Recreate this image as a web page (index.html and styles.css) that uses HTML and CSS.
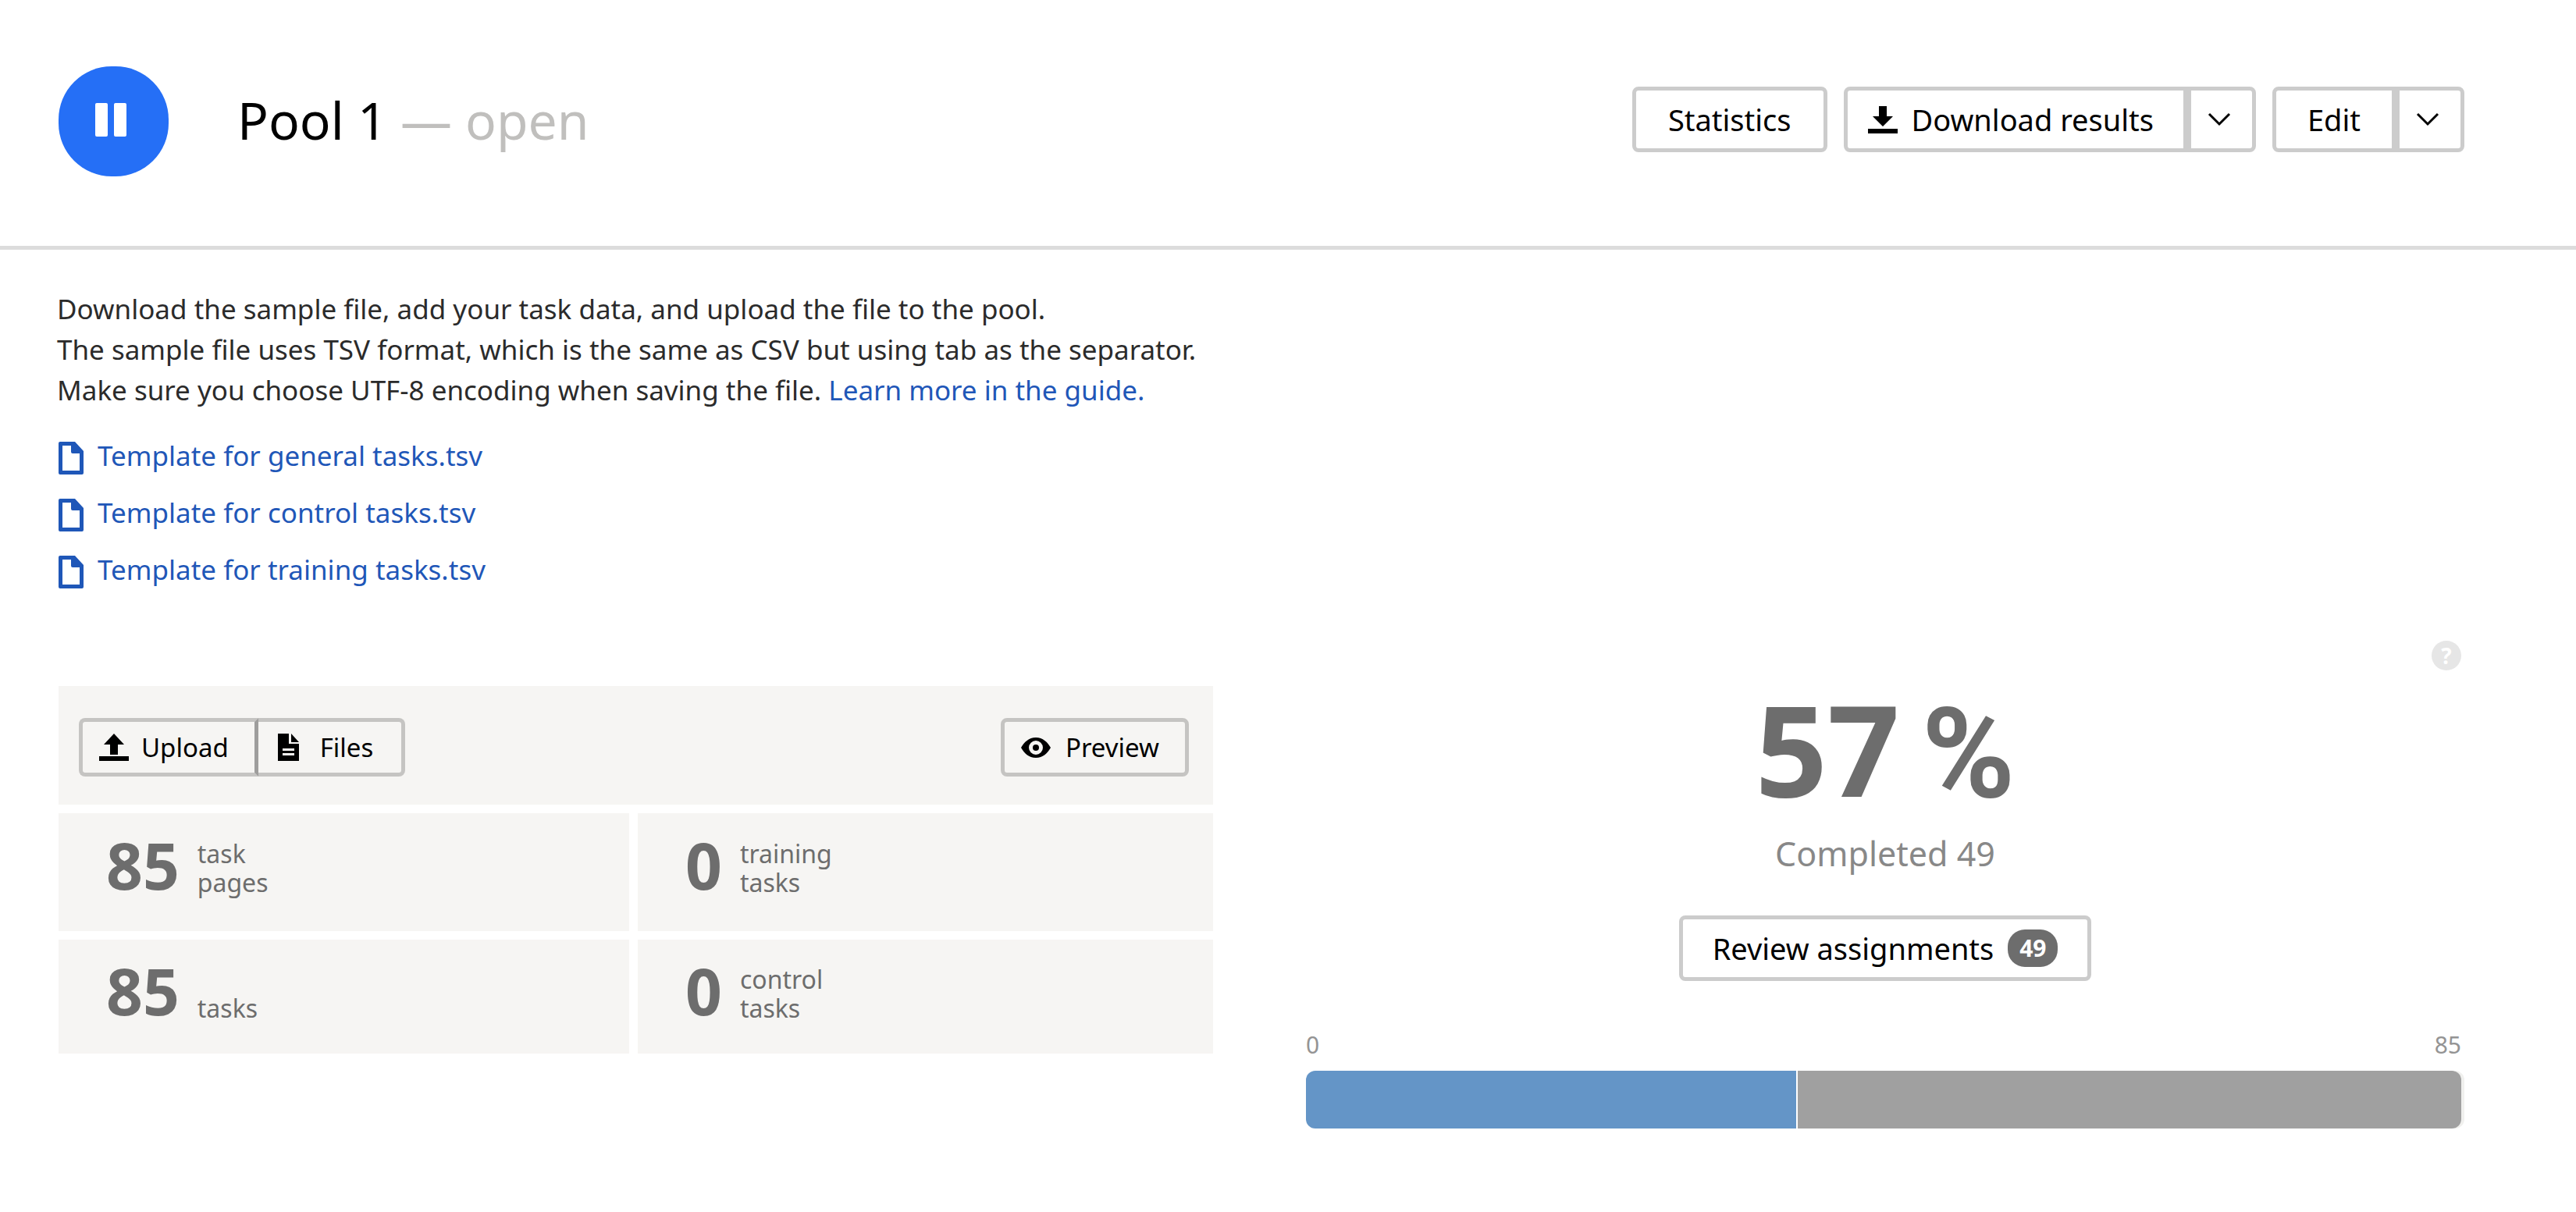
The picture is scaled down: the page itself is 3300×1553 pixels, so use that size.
FILE: index.html
```html
<!DOCTYPE html>
<html lang="en">
<head>
<meta charset="utf-8">
<meta name="viewport" content="width=device-width, initial-scale=1">
<title>Pool 1</title>
<link rel="stylesheet" href="styles.css">
</head>
<body>
<header class="header">
  <button class="pause" type="button" aria-label="Pause pool">
    <svg width="40" height="43" viewBox="0 0 40 43" fill="currentColor" aria-hidden="true"><rect width="16" height="43" rx="2"/><rect x="24" width="16" height="43" rx="2"/></svg>
  </button>
  <h1 class="title">Pool 1 <span class="status">— open</span></h1>
  <div class="actions">
    <button class="btn" type="button">Statistics</button>
    <div class="split">
      <button class="btn btn-download" type="button">
        <svg width="38" height="35" viewBox="0 0 38 35" fill="currentColor" aria-hidden="true"><path d="M14 0h10v13h8L19 26 6 13h8zM0 29h38v6H0z"/></svg>
        Download results
      </button>
      <button class="btn btn-more" type="button" aria-label="More download options">
        <svg width="30" height="18" viewBox="0 0 30 18" fill="none" stroke="currentColor" stroke-width="3" aria-hidden="true"><path d="M2 2l13 13L28 2"/></svg>
      </button>
    </div>
    <div class="split">
      <button class="btn btn-edit" type="button">Edit</button>
      <button class="btn btn-more" type="button" aria-label="More edit options">
        <svg width="30" height="18" viewBox="0 0 30 18" fill="none" stroke="currentColor" stroke-width="3" aria-hidden="true"><path d="M2 2l13 13L28 2"/></svg>
      </button>
    </div>
  </div>
</header>
<main class="main">
  <p class="intro">Download the sample file, add your task data, and upload the file to the pool.<br>The sample file uses TSV format, which is the same as CSV but using tab as the separator.<br>Make sure you choose UTF-8 encoding when saving the file. <a href="#">Learn more in the guide.</a></p>
  <ul class="templates">
    <li><a href="#"><svg width="32" height="42" viewBox="0 0 32 42" fill="currentColor" aria-hidden="true"><path fill-rule="evenodd" d="M2 0h19l11 12v28a2 2 0 0 1-2 2H2a2 2 0 0 1-2-2V2a2 2 0 0 1 2-2zm3 5v32h22V15H18a2 2 0 0 1-2-2V5z"/></svg>Template for general tasks.tsv</a></li>
    <li><a href="#"><svg width="32" height="42" viewBox="0 0 32 42" fill="currentColor" aria-hidden="true"><path fill-rule="evenodd" d="M2 0h19l11 12v28a2 2 0 0 1-2 2H2a2 2 0 0 1-2-2V2a2 2 0 0 1 2-2zm3 5v32h22V15H18a2 2 0 0 1-2-2V5z"/></svg>Template for control tasks.tsv</a></li>
    <li><a href="#"><svg width="32" height="42" viewBox="0 0 32 42" fill="currentColor" aria-hidden="true"><path fill-rule="evenodd" d="M2 0h19l11 12v28a2 2 0 0 1-2 2H2a2 2 0 0 1-2-2V2a2 2 0 0 1 2-2zm3 5v32h22V15H18a2 2 0 0 1-2-2V5z"/></svg>Template for training tasks.tsv</a></li>
  </ul>
  <div class="columns">
    <section class="data">
      <div class="toolbar">
        <div class="split">
          <button class="btn-small btn-upload" type="button">
            <svg width="38" height="35" viewBox="0 0 38 35" fill="currentColor" aria-hidden="true"><path d="M19 0l13 14h-8v13H14V14H6zM0 29h38v6H0z"/></svg>
            Upload
          </button>
          <button class="btn-small btn-files" type="button">
            <svg width="27" height="35" viewBox="0 0 27 35" fill="currentColor" aria-hidden="true"><path fill-rule="evenodd" d="M0 0h14v13h13v22H0zM6 19v3h15v-3zM6 25v3h15v-3zM17 0l10 11H17z"/></svg>
            Files
          </button>
        </div>
        <button class="btn-small btn-preview" type="button">
          <svg width="38" height="26" viewBox="0 0 38 26" fill="currentColor" aria-hidden="true"><path fill-rule="evenodd" d="M19 0c9 0 15 6 19 13-4 7-10 13-19 13S4 20 0 13C4 6 10 0 19 0zm0 4a9 9 0 1 0 0 18 9 9 0 0 0 0-18z"/><circle cx="19" cy="13" r="4"/></svg>
          Preview
        </button>
      </div>
      <div class="stat"><strong>85</strong><span>task<br>pages</span></div>
      <div class="stat"><strong>0</strong><span>training<br>tasks</span></div>
      <div class="stat stat-last"><strong>85</strong><span>tasks</span></div>
      <div class="stat stat-last"><strong>0</strong><span>control<br>tasks</span></div>
    </section>
    <section class="progress">
      <button class="help" type="button" aria-label="Help">?</button>
      <div class="percent"><span>57</span> <span class="sign">%</span></div>
      <p class="completed">Completed 49</p>
      <button class="btn btn-review" type="button">Review assignments <span class="badge">49</span></button>
      <div class="scale"><span>0</span><span>85</span></div>
      <div class="bar" role="progressbar" aria-label="Completed" aria-valuemin="0" aria-valuemax="85" aria-valuenow="49">
        <div class="bar-done" style="width: 42.4%"></div>
        <div class="bar-rest"></div>
      </div>
    </section>
  </div>
</main>
</body>
</html>
```
FILE: styles.css
```css
* {
  box-sizing: border-box;
}

body {
  margin: 0;
  background: #fff;
  color: #000;
  font-family: "Noto Sans", "Open Sans", sans-serif;
}

button {
  margin: 0;
  font-family: inherit;
  color: inherit;
  cursor: pointer;
}

svg {
  display: block;
  flex: none;
}

a {
  color: #1f57b8;
  text-decoration: none;
}

/* Header */

.header {
  display: flex;
  align-items: flex-start;
  padding: 85px 143px 89px 75px;
  border-bottom: 5px solid #dcdcdc;
}

.pause {
  display: flex;
  align-items: center;
  justify-content: center;
  width: 141px;
  height: 141px;
  padding: 0 8px 5px 0;
  border: 0;
  border-radius: 68px;
  background: #256ff6;
  color: #fff;
}

.title {
  margin: 0 0 0 88px;
  font-size: 66px;
  line-height: 136px;
  font-weight: 400;
}

.status {
  color: #c0bfbd;
}

.actions {
  display: flex;
  gap: 21px;
  margin: 26px 0 0 auto;
}

.split {
  display: flex;
}

.btn {
  display: flex;
  align-items: center;
  justify-content: center;
  height: 84px;
  padding: 0 41px;
  border: 5px solid #ccc;
  border-radius: 8px;
  background: #fff;
  font-size: 38px;
  line-height: 48px;
}

.split .btn:first-child {
  border-radius: 8px 0 0 8px;
}

.split .btn:last-child {
  border-radius: 0 8px 8px 0;
}

.btn-download {
  gap: 18px;
  padding: 0 38px 0 26px;
}

.btn-edit {
  padding: 0 40px;
}

.btn-more {
  width: 88px;
  padding: 0 6px 0 0;
}

/* Intro */

.main {
  padding: 50px 143px 60px 73px;
}

.intro {
  margin: 0;
  font-size: 35px;
  line-height: 52px;
  color: #2b2b2b;
}

.templates {
  display: flex;
  flex-direction: column;
  align-items: flex-start;
  gap: 31px;
  margin: 40px 0 67px;
  padding: 0 0 0 2px;
  list-style: none;
}

.templates a {
  display: flex;
  align-items: flex-start;
  gap: 18px;
  height: 42px;
  font-size: 35px;
  line-height: 36px;
}

/* Columns */

.columns {
  display: grid;
  grid-template-columns: 1479fr 1484fr;
  gap: 119px;
  align-items: start;
  padding-left: 2px;
}

.data {
  display: grid;
  grid-template-columns: 731fr 737fr;
  gap: 11px;
  padding-top: 58px;
}

.toolbar {
  grid-column: 1 / -1;
  display: flex;
  align-items: flex-start;
  justify-content: space-between;
  padding: 41px 31px 36px 26px;
  background: #f6f5f3;
}

.btn-small {
  display: flex;
  align-items: center;
  height: 75px;
  padding: 0 33px 0 21px;
  gap: 16px;
  border: 5px solid #c5c4c2;
  border-radius: 8px;
  background: #f6f5f3;
  font-size: 33px;
  line-height: 44px;
}

.btn-upload {
  border-right-color: #9f9e9d;
  border-radius: 8px 0 0 8px;
}

.btn-files {
  gap: 27px;
  padding: 0 36px 0 25px;
  border-left: 0;
  border-radius: 0 8px 8px 0;
}

.btn-preview {
  gap: 19px;
}

.stat {
  display: flex;
  align-items: flex-end;
  gap: 23px;
  padding: 24px 61px 44px;
  height: 151px;
  background: #f6f5f3;
  color: #6d6d6d;
}

.stat-last {
  height: 146px;
  padding-bottom: 40px;
}

.stat strong {
  font-size: 82px;
  line-height: 82px;
}

.stat span {
  font-size: 32px;
  line-height: 37px;
}

/* Progress */

.progress {
  display: flex;
  flex-direction: column;
  align-items: center;
}

.help {
  align-self: flex-end;
  width: 38px;
  height: 38px;
  margin-right: 4px;
  padding: 0;
  border: 0;
  border-radius: 50%;
  background: #e6e6e6;
  color: #fff;
  font-size: 28px;
  line-height: 38px;
  font-weight: 700;
}

.percent {
  display: flex;
  align-items: baseline;
  gap: 28px;
  margin-top: 21px;
  font-size: 162px;
  line-height: 156px;
  font-weight: 700;
  color: #6d6d6d;
}

.sign {
  font-family: Roboto, sans-serif;
}

.completed {
  margin: 20px 0 0;
  font-size: 43px;
  line-height: 60px;
  color: #888;
}

.btn-review {
  margin-top: 49px;
  gap: 18px;
  padding: 0 38px;
}

.badge {
  width: 64px;
  height: 48px;
  border-radius: 22px;
  background: #6d6d6d;
  color: #fff;
  font-size: 30px;
  line-height: 48px;
  font-weight: 700;
}

.scale {
  display: flex;
  justify-content: space-between;
  align-self: stretch;
  margin-top: 62px;
  padding: 0 4px 0 0;
  font-size: 30px;
  line-height: 40px;
  color: #949494;
}

.bar {
  display: flex;
  align-self: stretch;
  gap: 2px;
  height: 74px;
  margin-top: 13px;
  padding-right: 4px;
  border-radius: 12px;
  background: linear-gradient(to left, #f0f0ee 12px, #fff 12px);
  overflow: hidden;
}

.bar-done {
  background: #6495c7;
}

.bar-rest {
  flex: 1;
  border-radius: 0 12px 12px 0;
  background: #a0a0a0;
}
```
